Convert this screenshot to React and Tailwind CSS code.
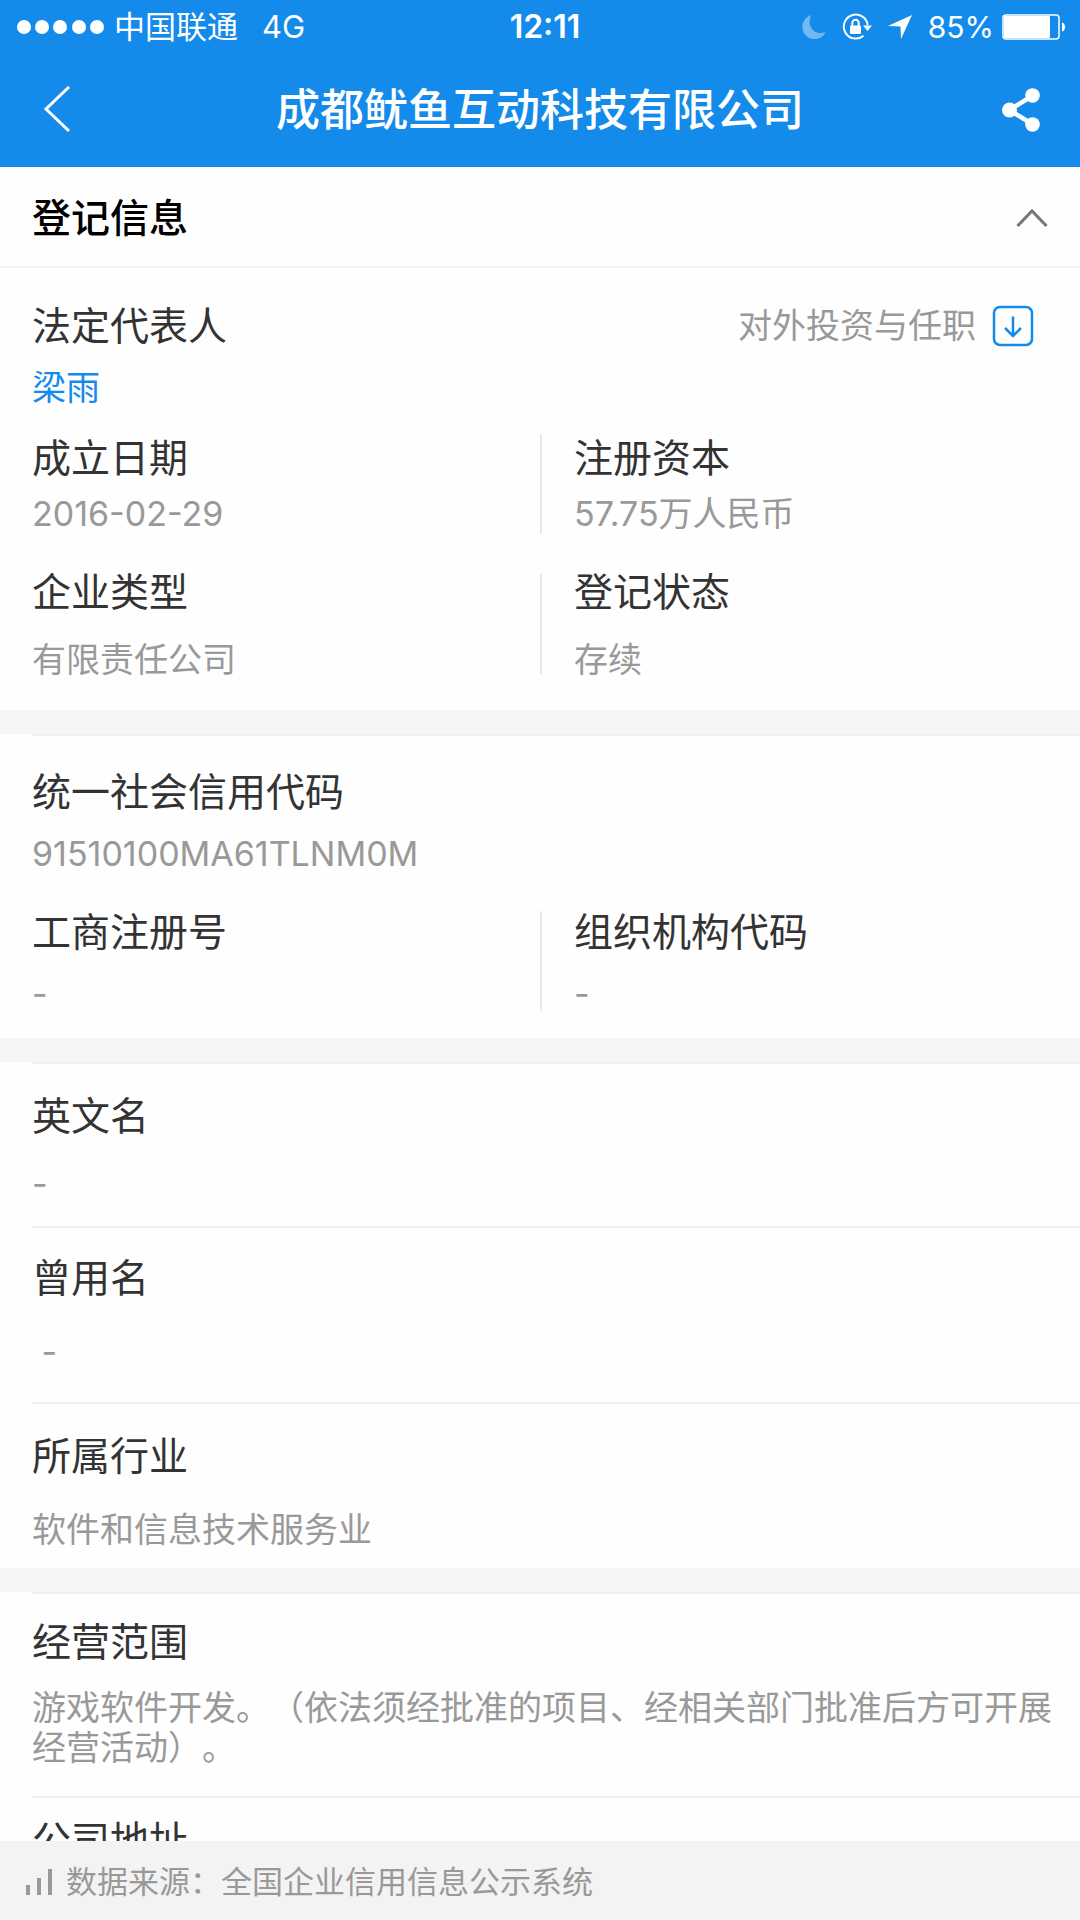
function StatusBar() {
  return (
    <div className="grid h-13 grid-cols-[1fr_auto_1fr] items-center pt-0.5 pr-3.5 pl-4 text-[31px] leading-10">
      <div className="flex items-center">
        <svg width="90" height="16" viewBox="0 0 90 16" fill="currentColor" aria-hidden="true">
          <circle cx="8" cy="8" r="7" />
          <circle cx="26" cy="8" r="7" />
          <circle cx="44" cy="8" r="7" />
          <circle cx="63" cy="8" r="7" />
          <circle cx="81" cy="8" r="7" />
        </svg>
        <span className="ml-2">中国联通</span>
        <span className="ml-6">4G</span>
      </div>
      <span className="pl-2 text-[32px] font-semibold">12:11</span>
      <div className="flex items-center justify-end">
        <svg className="opacity-40" width="24" height="26" viewBox="0 0 24 26" fill="currentColor" aria-hidden="true">
          <path d="M9 1C3 3.500 0 8 0.500 14C1 20.500 6 25 12.500 25C17.500 25 21.500 22.500 23.500 18C20 19.500 15.500 19.500 12 17C7.500 13.500 6.500 7 9 1Z" />
        </svg>
        <svg className="ml-4" width="30" height="28" viewBox="0 0 30 28" fill="none" aria-hidden="true">
          <path d="M21.500 22.800A12 12 0 1 1 25.700 12" stroke="currentColor" strokeWidth="2" />
          <path d="M21 12.500H30L25.500 18Z" fill="currentColor" />
          <rect x="8" y="12.500" width="11" height="8.500" rx="1" fill="currentColor" />
          <path d="M10.300 13V10A3.200 3.200 0 0 1 16.700 10V13" stroke="currentColor" strokeWidth="2" />
        </svg>
        <svg className="ml-4" width="24" height="24" viewBox="0 0 24 24" fill="currentColor" aria-hidden="true">
          <path d="M24 0L0 11L12.500 11.500L13 24Z" />
        </svg>
        <span className="ml-4 text-[30px]">85%</span>
        <svg className="ml-2" width="64" height="26" viewBox="0 0 64 26" fill="none" aria-hidden="true">
          <rect x="1" y="1" width="56" height="24" rx="3" stroke="currentColor" strokeWidth="1.500" />
          <rect x="2" y="2" width="46" height="22" rx="1" fill="currentColor" />
          <path d="M60 8.500C64 9 64 17 60 17.500Z" fill="currentColor" />
        </svg>
      </div>
    </div>
  )
}

function NavBar() {
  return (
    <div className="grid h-[115px] grid-cols-[1fr_auto_1fr] items-center px-10">
      <button type="button" aria-label="返回" className="justify-self-start">
        <svg width="32" height="48" viewBox="0 0 32 48" fill="none" stroke="currentColor" strokeWidth="3">
          <path d="M29 1L6 23L29 45" />
        </svg>
      </button>
      <h1 className="text-[44px] leading-13 font-medium">成都鱿鱼互动科技有限公司</h1>
      <button type="button" aria-label="分享" className="justify-self-end">
        <svg width="38" height="44" viewBox="0 0 38 44" fill="currentColor">
          <path d="M31 7.500L7 22L31 36.500" fill="none" stroke="currentColor" strokeWidth="4.500" />
          <circle cx="7.500" cy="22" r="7.500" />
          <circle cx="30.500" cy="7.500" r="7.300" />
          <circle cx="30.500" cy="36.500" r="7.300" />
        </svg>
      </button>
    </div>
  )
}

function Field({ label, children, className = 'gap-4.5' }) {
  return (
    <dl className={`flex flex-col ${className}`}>
      <dt className="text-[39px] leading-12 text-[#333]">{label}</dt>
      <dd className="text-[34px] leading-10 whitespace-pre-wrap text-[#999]">{children}</dd>
    </dl>
  )
}

function Pair({ children, className }) {
  return (
    <div className={`grid grid-cols-2 ${className}`}>
      {children}
    </div>
  )
}

function RightField(props) {
  return (
    <div className="flex items-center gap-8">
      <div className="h-25 w-0.5 bg-[#e9e9e9]" />
      <Field {...props} />
    </div>
  )
}

function Line() {
  return <div className="ml-8 h-0.5 bg-[#f1f1f1]" />
}

function Band() {
  return (
    <div>
      <div className="h-6 bg-[#f6f6f6]" />
      <Line />
    </div>
  )
}

export default function App() {
  return (
    <div className="flex h-screen flex-col bg-[#fefefe] font-['Inter','Noto_Sans_CJK_SC',sans-serif] [text-spacing-trim:space-all]">
      <header className="shrink-0 bg-[#148beb] text-white">
        <StatusBar />
        <NavBar />
      </header>

      <main className="min-h-0 flex-1 overflow-y-auto [scrollbar-width:none]">
        <div className="flex h-[101px] items-center justify-between border-b-2 border-[#f4f4f4] px-8 pt-0.5">
          <h2 className="text-[39px] leading-12 font-medium text-black">登记信息</h2>
          <button type="button" aria-label="收起" className="text-[#777]">
            <svg width="32" height="20" viewBox="0 0 32 20" fill="none" stroke="currentColor" strokeWidth="3">
              <path d="M1.500 18L16 3L30.500 18" />
            </svg>
          </button>
        </div>

        <section className="pt-8.5 pb-7.5">
          <div className="flex items-start justify-between pr-11.5 pl-8">
            <Field label="法定代表人">
              <a href="#person" className="text-[#148beb]">梁雨</a>
            </Field>
            <button type="button" className="flex h-12 items-center gap-4 text-[34px] leading-10 text-[#999]">
              对外投资与任职
              <svg className="text-[#148beb]" width="42" height="42" viewBox="0 0 42 42" fill="none" stroke="currentColor" strokeWidth="2.500">
                <rect x="2" y="2" width="38" height="38" rx="6" />
                <path d="M21 11.500V31M13 23L21 31L29 23" />
              </svg>
            </button>
          </div>
          <Pair className="mt-6.5">
            <Field label="成立日期" className="gap-3 pl-8">2016-02-29</Field>
            <RightField label="注册资本" className="gap-3">57.75万人民币</RightField>
          </Pair>
          <Pair className="mt-8.5">
            <Field label="企业类型" className="gap-6 pl-8">有限责任公司</Field>
            <RightField label="登记状态" className="gap-6">存续</RightField>
          </Pair>
        </section>

        <Band />

        <section className="pt-8 pb-6">
          <Field label="统一社会信用代码" className="gap-4.5 pl-8">91510100MA61TLNM0M</Field>
          <Pair className="mt-8.5">
            <Field label="工商注册号" className="gap-4.5 pl-8">-</Field>
            <RightField label="组织机构代码" className="gap-4.5">-</RightField>
          </Pair>
        </section>

        <Band />

        <section>
          <Field label="英文名" className="gap-6 px-8 pt-7 pb-5.5">-</Field>
          <Line />
          <Field label="曾用名" className="gap-7.5 px-8 pt-6.5 pb-7.5">{' -'}</Field>
          <Line />
          <Field label="所属行业" className="gap-7.5 px-8 pt-7 pb-4.5">软件和信息技术服务业</Field>
        </section>

        <Band />

        <section>
          <Field label="经营范围" className="gap-5.5 pr-6 pl-8 pt-6 pb-7">
            游戏软件开发。（依法须经批准的项目、经相关部门批准后方可开展经营活动）。
          </Field>
          <Line />
          <div className="px-8 pt-4.5 text-[39px] leading-12 text-[#333]">公司地址</div>
        </section>
      </main>

      <footer className="flex h-[79px] shrink-0 items-center bg-[#f3f3f3] px-6 pt-0.5 text-[31px] leading-10 text-[#999]">
        <svg className="mr-3" width="30" height="28" viewBox="0 0 30 28" fill="currentColor" aria-hidden="true">
          <rect x="2" y="17" width="4" height="10" />
          <rect x="13" y="10" width="4" height="17" />
          <rect x="24" y="1" width="4" height="26" />
        </svg>
        数据来源：全国企业信用信息公示系统
      </footer>
    </div>
  )
}
